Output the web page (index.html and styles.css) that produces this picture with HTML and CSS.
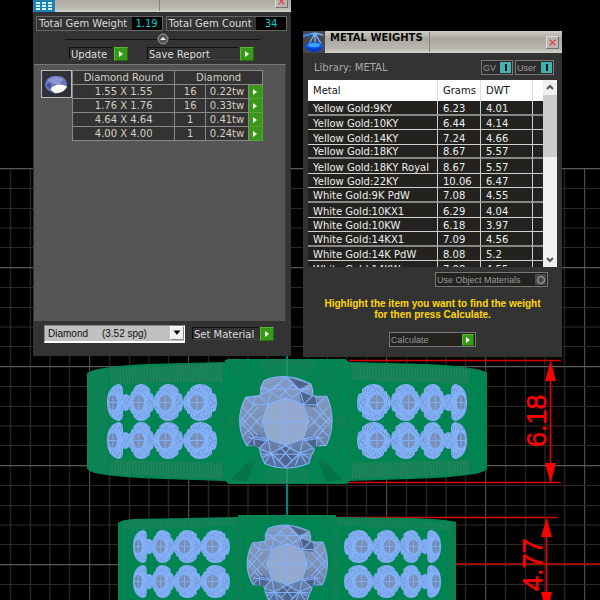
FILE: index.html
```html
<!DOCTYPE html>
<html lang="en">
<head>
<meta charset="utf-8">
<title>Metal Weights</title>
<link rel="stylesheet" href="styles.css">
</head>
<body>
<main class="desktop">
<svg class="viewport" viewBox="0 0 600 600" preserveAspectRatio="xMidYMid slice" role="img" aria-label="Ring model">
  <defs>
    <pattern id="cols" x="-10" y="0" width="99" height="99" patternUnits="userSpaceOnUse">
      <path d="M20.5 0V99M40.5 0V99M60 0V99M79.5 0V99" stroke="#242424" stroke-width="1.4"/>
      <path d="M.5 0V99" stroke="#4a4a4a" stroke-width="1.4"/>
    </pattern>
    <pattern id="rows" x="0" y="168" width="99" height="99" patternUnits="userSpaceOnUse">
      <path d="M0 20.5H99M0 40.5H99M0 60H99M0 79.5H99" stroke="#2b2b2b" stroke-width="1.2"/>
      <path d="M0 .7H99" stroke="#5a5a5a" stroke-width="1.3"/>
    </pattern>
    <pattern id="hatch" width="3" height="20" patternUnits="userSpaceOnUse" patternTransform="rotate(-4)">
      <path d="M1 0V20" stroke="#60786b" stroke-width="1.3" opacity=".6"/>
    </pattern>
    <pattern id="speck" width="11" height="9" patternUnits="userSpaceOnUse">
      <path d="M1 1h1M4 2h1M8 0h1M6 4h1M2 5h1M9 6h1M4 8h1M0 7h1M7 7h1" stroke="#4c6898" stroke-width=".8"/>
      <path d="M0 3l4-2M5 7l5-3" stroke="#7191c4" stroke-width=".5"/>
    </pattern>
    <symbol id="stone" viewBox="0 0 34 38" preserveAspectRatio="none">
      <path d="M5 9V6Q5 4 8 3Q11 0 17 0Q23 0 27 5L27 7L30 8V10Q34 13 34 19Q34 25 30 28V30L27 31V33Q23 38 17 38Q11 38 8 35Q5 34 5 32V29L2 28Q0 25 0 19Q0 13 2 10Z" fill="#83b1f8"/>
      <path d="M5 9V6Q5 4 8 3Q11 0 17 0Q23 0 27 5L27 7L30 8V10Q34 13 34 19Q34 25 30 28V30L27 31V33Q23 38 17 38Q11 38 8 35Q5 34 5 32V29L2 28Q0 25 0 19Q0 13 2 10Z" fill="url(#speck)"/>
      <path d="M14 10L8 15V23L14 28L24 29L30 22V15L24 10Z" fill="#83b1f8"/>
      <ellipse cx="20" cy="19" rx="7" ry="8" fill="#7891b8"/>
      <path d="M20 11V27M13 19H27" stroke="#83b1f8"/>
      <path d="M3 19l3-3 3 3-3 3Z" fill="none" stroke="#6d8ec4" stroke-width=".7"/>
    </symbol>
    <symbol id="side" viewBox="0 0 22 38" preserveAspectRatio="none">
      <path d="M0 12Q3 9 6 11V5Q7 0 11 0Q22 3 22 19Q22 35 11 38Q7 38 6 33V27Q3 29 0 26Z" fill="#83b1f8"/>
      <path d="M0 12Q3 9 6 11V5Q7 0 11 0Q22 3 22 19Q22 35 11 38Q7 38 6 33V27Q3 29 0 26Z" fill="url(#speck)"/>
      <path d="M12 9L7 15V23L12 29L20 28V10Z" fill="#83b1f8"/>
      <ellipse cx="16" cy="19" rx="4" ry="8" fill="#6d87b0"/>
      <path d="M16 11V27M12 19H20" stroke="#83b1f8"/>
    </symbol>
    <linearGradient id="facet" x1="0" y1="0" x2="0" y2="1">
      <stop offset="0" stop-color="#829bc6"/><stop offset=".5" stop-color="#7f91b2"/><stop offset="1" stop-color="#516d9b"/>
    </linearGradient>
    <g id="center-stone" stroke="#83b1f8" stroke-width="3.6" fill="none">
      <path fill="url(#facet)" d="M-75-103L-65-123Q0-152 77-113L82-96V-78L92-77L125-76Q157 0 123 72L88 74L85 90L78 102L70 127Q0 154-63 127L-75 99L-78 82L-87 73L-118 72Q-158 0-120-73L-80-78L-75-82Z"/>
      <path fill="#50658e" stroke="none" d="M10-134L70-113 42-98ZM42-93L80-80 100-65 88-42 48-50ZM-104 43L-82 37-61 60-80 78-117 70ZM60 59L84 43 102 70 83 82ZM-26 91L0 75 31 103 0 132Z"/>
      <path d="M-75-82L-44-94L0-134L44-94L82-78M-44-94L-20-112 20-72 72-108M44-94L20-112-20-72-72-108M-75-98L75-98M-80-78L-54-51 0-71 54-51 82-78M-44-94L-55-51M44-94L55-51M-120-73L-96-50-136 0-96 45-118 72M120-73L96-50 137 0 96 45 120 72M-96-50L-54-51M96-50L54-51M-96-50L-92-77M96-50L92-77M-130-45L-70 18M-136-15L-83 43M-130 45L-70-18M-136 15L-83-43M130-45L70 18M136-15L83 43M130 45L70-18M136 15L83-43M-96 45L-53 53-78 82-44 96 0 138 44 96 83 80 53 53 96 45M-96 45L-94 73M96 45L94 73M-53 53L-44 96M53 53L44 96M-75 99L75 99M-44 96L-20 118 20 73M44 96L20 118-20 73M-63 127L-44 96-30 132M63 127L44 96 30 132M-72 110L0 73 72 110M-115 48L-58 58M115 48L58 58"/>
      <path fill="#94a9cf" d="M0-71L54-49L71 0L53 53L0 73L-53 53L-71 0L-54-49Z"/>
      <path d="M0-71V73M-71 0H71"/>
    </g>
    <g id="stones-upper">
      <use href="#stone" x="357" y="384" width="34" height="37"/><use href="#stone" x="391" y="384" width="30" height="37"/><use href="#stone" x="420" y="384" width="26" height="37"/><use href="#side" x="445" y="384" width="22" height="37"/>
      <use href="#stone" x="357" y="422" width="34" height="37"/><use href="#stone" x="391" y="422" width="30" height="37"/><use href="#stone" x="420" y="422" width="26" height="37"/><use href="#side" x="445" y="422" width="22" height="37"/>
    </g>
    <g id="stones-lower">
      <use href="#stone" x="344" y="530" width="30" height="33"/><use href="#stone" x="373" y="530" width="28" height="33"/><use href="#stone" x="400" y="530" width="23" height="33"/><use href="#side" x="422" y="530" width="19" height="33"/>
      <use href="#stone" x="344" y="565" width="30" height="33"/><use href="#stone" x="373" y="565" width="28" height="33"/><use href="#stone" x="400" y="565" width="23" height="33"/><use href="#side" x="422" y="565" width="19" height="33"/>
    </g>
  </defs>
  <rect width="600" height="600" fill="#000"/>
  <rect y="168" width="600" height="432" fill="url(#cols)"/>
  <rect y="168" width="600" height="432" fill="url(#rows)"/>
  <path d="M287 350V520" stroke="#00838c" stroke-width="2"/>

  <path d="M349 360.5H561M349 482.5H561M336 517.5H557" stroke="#d60000" stroke-width="1.4"/>
  <path d="M455 564H600" stroke="#9a0f00" stroke-width="2"/>

  <path fill="#008552" d="M87 373Q92 370 98 369Q120 365 147 364L225 362V360L229 359H345L349 362L427 364Q454 365 476 369Q483 370 487 373V469Q484 472 475 474Q450 478 411 479L349 481V483L345 484H229L225 481L163 479Q124 478 99 474Q90 472 87 469Z"/>
  <path fill="url(#hatch)" d="M108 369L222 363V382L112 384ZM352 363L468 369V384L352 380ZM112 460L222 463V479L108 474ZM352 463L468 460V474L352 479Z"/>
  <path fill="url(#hatch)" opacity=".5" d="M87 375L106 369V474L87 468ZM258 360H320L308 376H264ZM268 468H306L312 483H260Z"/>
  <g fill="none" stroke="#36745b" opacity=".6">
    <path d="M106 369V474M222 363V480M351 363V480M469 369V474M226 361L262 402M347 361L311 402M226 482L257 456M347 482L313 456"/>
    <path d="M230 361L258 390M236 361L260 384M241 361L262 380M343 361L316 390M337 361L314 384M332 361L312 380M262 402Q245 396 240 391Q232 400 229 421Q232 450 241 455M311 402Q328 396 333 391Q341 400 344 421Q341 450 332 455M258 383Q264 362 286 360Q310 362 315 383M258 459Q264 480 286 483Q310 480 315 459"/>
    <path d="M228 417H237M227 420H237M227 423H237M229 426H237M335 417H346M335 420H347M335 423H347M335 426H346"/>
  </g>
  <path fill="#075f40" opacity=".45" d="M230 480L252 458 240 479ZM233 480L255 459 247 482ZM343 480L321 458 333 479ZM340 480L318 459 326 482Z"/>
  <path d="M287 360V483" stroke="#70a58a" opacity=".6"/>
  <use href="#stones-upper"/>
  <use href="#stones-upper" transform="translate(574) scale(-1 1)"/>
  <use href="#center-stone" transform="translate(285.5 421.5) scale(.331)"/>

  <path fill="#008552" d="M118 523Q120 520 133 519L238 517V515H336V517L410 518Q445 519 456 522V600H118Z"/>
  <path fill="url(#hatch)" opacity=".7" d="M124 521L236 517V526L124 530ZM338 518L450 522V530L338 526Z"/>
  <path fill="none" stroke="#40745b" opacity=".7" d="M124 522V600M236 517V600M240 517V600M334 517V600M338 517V600M450 522V600M241 517L270 544M333 517L304 544"/>
  <use href="#stones-lower"/>
  <use href="#stones-lower" transform="translate(574) scale(-1 1)"/>
  <use href="#center-stone" transform="translate(287 564) scale(.288)"/>

  <path d="M550.5 362V482M546.5 519V600" stroke="#e60000" stroke-width="1.6"/>
  <path fill="#f00" d="M550.5 361L556 381H545ZM550.5 483L545 463H556ZM546.5 518L552 537H541ZM541 592H552L550 600H543Z"/>
  <text class="dimension" transform="translate(546 447) rotate(-90)">6.18</text>
  <text class="dimension" transform="translate(542 591) rotate(-90)">4.77</text>
</svg>

<section class="window gem-window" aria-label="Gem report">
  <header class="titlebar gem-title">
    <svg class="app-icon" viewBox="0 0 22 22" aria-hidden="true"><rect width="22" height="22" fill="#1b82b7"/><path d="M2 0H20V10H2Z" fill="#e5f4fa"/><path d="M3 3H9M11 3H19M3 6H9M11 6H19" stroke="#3489b0"/><path d="M3 13h4M9 13h4M15 13h4M3 16h4M9 16h4M15 16h4M3 19h4M9 19h4M15 19h4" stroke="#d9f3fa" stroke-width="2"/></svg>
    <span class="title-text"></span>
    <button class="close" aria-label="Close"><svg viewBox="0 0 12 12"><path d="M3 3L9 9M9 3L3 9"/></svg></button>
  </header>
  <div class="totals">
    <div class="total"><span>Total Gem Weight</span><output>1.19</output></div>
    <div class="total"><span>Total Gem Count</span><output>34</output></div>
  </div>
  <div class="divider"><button class="knob" aria-label="Collapse"><svg viewBox="0 0 12 12"><circle cx="6" cy="6" r="5" fill="#555" stroke="#999"/><path d="M3 7L6 4L9 7Z" fill="#eee"/></svg></button></div>
  <div class="actions">
    <button class="action update"><span>Update</span><i class="go"></i></button>
    <button class="action save"><span>Save Report</span><i class="go"></i></button>
  </div>
  <div class="gem-panel">
    <svg class="thumb" viewBox="0 0 31 28" aria-hidden="true"><rect width="31" height="28" fill="#303036"/><path d="M3 15Q4 5 15 5Q26 5 27 14Q27 20 20 23Q14 26 9 22Q4 20 3 15Z" fill="#6874bd"/><path d="M6 10Q14 3 23 9L19 14H10Z" fill="#8f95d0"/><path d="M4 15L10 12 9 20Z" fill="#4350a0"/><path d="M9 20Q13 13 23 15L27 17Q23 24 14 24Z" fill="#fff"/></svg>
    <table class="gem-table">
      <thead><tr><th class="c-size">Diamond Round</th><th colspan="3">Diamond</th></tr></thead>
      <tbody>
        <tr><td>1.55 X 1.55</td><td class="c-count">16</td><td class="c-weight">0.22tw</td><td class="c-go"><button class="go" aria-label="Select 1.55"></button></td></tr>
        <tr><td>1.76 X 1.76</td><td>16</td><td>0.33tw</td><td class="c-go"><button class="go" aria-label="Select 1.76"></button></td></tr>
        <tr><td>4.64 X 4.64</td><td>1</td><td>0.41tw</td><td class="c-go"><button class="go" aria-label="Select 4.64"></button></td></tr>
        <tr><td>4.00 X 4.00</td><td>1</td><td>0.24tw</td><td class="c-go"><button class="go" aria-label="Select 4.00"></button></td></tr>
      </tbody>
    </table>
  </div>
  <footer class="material">
    <div class="select-wrap">
      <select aria-label="Gem material"><option>Diamond&nbsp;&nbsp;&nbsp;&nbsp;&nbsp;(3.52 spg)</option></select>
      <span class="drop" aria-hidden="true"><svg viewBox="0 0 14 14"><path d="M3 4H11L7 9Z"/></svg></span>
    </div>
    <button class="action set"><span>Set Material</span><i class="go"></i></button>
  </footer>
</section>

<section class="window metal-window" aria-label="Metal weights">
  <header class="titlebar">
    <svg class="app-icon" viewBox="0 0 22 22" aria-hidden="true"><rect width="22" height="22" fill="#454850"/><path d="M0 5L12 2L20 4M12 2L6 13M12 2L18 13M12 2V12" stroke="#79b5ff" stroke-width="1.4" fill="none"/><path d="M0 5L8 3" stroke="#2b8cff" stroke-width="2"/><ellipse cx="11" cy="15" rx="9" ry="4" fill="#165be8"/><path d="M2 15Q4 21 11 21Q18 21 20 15Q11 20 2 15Z" fill="#083bc2"/><ellipse cx="11" cy="14" rx="6" ry="2" fill="#3fa6ff"/></svg>
    <h1 class="title-text">METAL WEIGHTS</h1>
    <button class="close" aria-label="Close"><svg viewBox="0 0 12 12"><path d="M3 3L9 9M9 3L3 9"/></svg></button>
  </header>
  <div class="library">
    <span>Library: METAL</span>
    <div class="toggles"><button class="toggle gv"><span>GV</span><i></i></button><button class="toggle user"><span>User</span><i></i></button></div>
  </div>
  <div class="metal-list">
    <div class="table-clip">
      <table class="metal-table">
        <thead><tr><th class="m-name">Metal</th><th class="m-grams">Grams</th><th class="m-dwt">DWT</th><th></th></tr></thead>
        <tbody>
          <tr><td>Yellow Gold:9KY</td><td>6.23</td><td>4.01</td><td></td></tr>
          <tr><td>Yellow Gold:10KY</td><td>6.44</td><td>4.14</td><td></td></tr>
          <tr><td>Yellow Gold:14KY</td><td>7.24</td><td>4.66</td><td></td></tr>
          <tr><td>Yellow Gold:18KY</td><td>8.67</td><td>5.57</td><td></td></tr>
          <tr><td>Yellow Gold:18KY Royal</td><td>8.67</td><td>5.57</td><td></td></tr>
          <tr><td>Yellow Gold:22KY</td><td>10.06</td><td>6.47</td><td></td></tr>
          <tr><td>White Gold:9K PdW</td><td>7.08</td><td>4.55</td><td></td></tr>
          <tr><td>White Gold:10KX1</td><td>6.29</td><td>4.04</td><td></td></tr>
          <tr><td>White Gold:10KW</td><td>6.18</td><td>3.97</td><td></td></tr>
          <tr><td>White Gold:14KX1</td><td>7.09</td><td>4.56</td><td></td></tr>
          <tr><td>White Gold:14K PdW</td><td>8.08</td><td>5.2</td><td></td></tr>
          <tr><td>White Gold:14KW</td><td>7.08</td><td>4.55</td><td></td></tr>
        </tbody>
      </table>
    </div>
    <div class="scrollbar" aria-hidden="true">
      <svg viewBox="0 0 14 15"><path d="M4 9L7 6L10 9"/></svg>
      <span class="scroll-thumb"></span>
      <svg viewBox="0 0 14 15"><path d="M4 6L7 9L10 6"/></svg>
    </div>
  </div>
  <button class="boxed object-materials"><span>Use Object Materials</span><i class="radio"></i></button>
  <p class="hint">Highlight the item you want to find the weight<br>for then press Calculate.</p>
  <button class="boxed calculate"><span>Calculate</span><i class="go"></i></button>
</section>
</main>
</body>
</html>
```
FILE: styles.css
```css
* { box-sizing: border-box; }
body { margin: 0; background: #000; color: #ddd; font: 10px/12px "DejaVu Sans", Verdana, sans-serif; }
button { font: inherit; color: inherit; padding: 0; border: 0; background: none; }
svg { display: block; }
.desktop { position: relative; min-height: 100vh; overflow: hidden; }
.viewport { position: absolute; inset: 0; width: 100%; height: 100%; }
.dimension { font: 27px "Liberation Sans", sans-serif; fill: #f00; stroke: #f00; stroke-width: 0.5; }

/* windows on the desktop */
.window { position: absolute; display: flex; flex-direction: column; background: #333; }
.gem-window { left: 33px; top: -10px; width: 258px; }
.metal-window { left: 303px; top: 31px; width: 259px; padding-bottom: 10px; }
.titlebar { display: flex; align-items: center; height: 22px; padding-right: 3px; background: linear-gradient(#d0cec7, #a9a79f 35%, #b9b7b1 80%, #d5d3cc); }
.gem-title { margin-bottom: 4px; }
.app-icon { width: 22px; height: 22px; }
.title-text { width: 105px; height: 20px; margin: 0; padding-left: 5px; border-right: 1px solid #85837d; color: #080808; font-size: 10px; line-height: 12px; font-weight: bold; white-space: nowrap; }
.close { width: 13px; height: 13px; margin-left: auto; border: 1px solid #77746f; border-top-color: #ddd; border-left-color: #ddd; background: #b9b6b0; }
.close path { stroke: #dc4248; stroke-width: 1.3; }

.totals { display: flex; gap: 3px; padding: 0 4px 0 3px; }
.total { display: flex; flex: 1 1 auto; height: 15px; border: 1px solid #666; line-height: 13px; }
.total span { flex: 1; padding-left: 2px; white-space: nowrap; }
.total output { width: 30px; background: #000; color: #00cfd2; text-align: center; }
.divider { display: flex; justify-content: center; align-items: center; height: 16px; margin: 0 31px 0 32px; background: linear-gradient(#111, #111) center / 100% 1px no-repeat; }
.knob { width: 12px; height: 12px; }
.actions { display: flex; height: 17px; padding-left: 36px; gap: 19px; }
.action { display: flex; gap: 2px; height: 14px; text-align: left; line-height: 13px; }
.action span { padding-left: 1px; height: 13px; border-left: 1px solid #0a0a0a; border-top: 1px solid #111; border-bottom: 1px solid #444; white-space: nowrap; }
.update span { width: 43px; }
.save span { width: 91px; }
.set span { width: 66px; }
.go { display: flex; flex: none; width: 14px; height: 14px; align-items: center; justify-content: center; background: #399719; border: 1px solid #59b830; border-right-color: #246f0b; border-bottom-color: #246f0b; }
.go::before { content: ""; border-left: 4px solid #f0ffe8; border-top: 3px solid transparent; border-bottom: 3px solid transparent; }

.gem-panel { display: flex; align-items: flex-start; height: 257px; margin: 0 5px 0 1px; padding: 5px 0 0 7px; background: #555; border-top: 1px solid #777; border-right: 1px solid #444; }
.thumb { width: 31px; height: 28px; border: 1px solid #bbb; }
.gem-table { border-collapse: collapse; width: 191px; text-align: center; background: #333; }
.gem-table th, .gem-table td { height: 14px; padding: 0; border: 1px solid #888; font-weight: normal; line-height: 12px; color: #d4cfc4; }
.c-size { width: 103px; }
.c-count { width: 31px; }
.c-weight { width: 43px; }
.gem-table .c-go { width: 14px; border-color: #59a030; }
.c-go .go { height: 13px; width: 13px; border: 0; }

.material { display: flex; justify-content: space-between; padding: 4px 17px 13px 11px; align-items: center; }
.select-wrap { display: flex; width: 141px; height: 18px; border: 1px solid #888; border-right-color: #fff; border-bottom: 2px solid #fff; background: #c0c0c0; }
.select-wrap select { flex: 1; min-width: 0; appearance: none; border: 0; border-radius: 0; padding: 0 0 0 3px; background: #c0c0c0; color: #111; font: 10px/15px "Liberation Sans", sans-serif; }
.drop { width: 14px; height: 14px; background: #efefef; border: 1px solid #fff; border-right-color: #888; border-bottom-color: #888; }

.library { display: flex; align-items: center; justify-content: space-between; height: 27px; padding: 2px 8px 0 11px; color: #aaa; }
.toggles { display: flex; gap: 2px; }
.toggle { display: flex; align-items: center; justify-content: space-between; height: 15px; border: 1px solid #777; background: #2c2c2c; padding: 0 1px; font: 9px/12px "Liberation Sans", sans-serif; color: #999; }
.gv { width: 32px; }
.user { width: 39px; }
.toggle i { width: 11px; height: 11px; background: linear-gradient(#041818, #041818) center / 2px 7px no-repeat #44b0b0; }

.metal-list { display: flex; height: 187px; margin: 0 5px; }
.table-clip { flex: 1; overflow: hidden; }
.metal-table { width: 100%; height: 196px; border-collapse: separate; border-spacing: 0; table-layout: fixed; text-align: left; background: #23221f; color: #eee; }
.metal-table th { height: 21px; padding: 0 0 0 5px; background: #fff; color: #111; font-weight: normal; border-right: 1px solid #ddd; }
.metal-table td { padding: 3px 0 0 5px; line-height: 10px; vertical-align: bottom; white-space: nowrap; border-right: 1px solid #ccc; border-bottom: 1px solid #d0d0d0; }
.metal-table tbody tr:nth-child(3n+1) td { border-bottom: 2px solid #888; padding-top: 2px; }
.metal-table th:last-child, .metal-table td:last-child { border-right: 0; }
.m-name { width: 130px; }
.m-grams { width: 43px; }
.m-dwt { width: 52px; }
.scrollbar { display: flex; flex-direction: column; justify-content: space-between; width: 14px; background: #f0f0f0; }
.scrollbar svg { width: 14px; height: 15px; }
.scrollbar path { fill: none; stroke: #555; stroke-width: 2; }
.scroll-thumb { height: 62px; margin-bottom: auto; background: #cdcdcd; }

.boxed { display: flex; align-items: center; justify-content: space-between; height: 15px; padding: 0 1px; border: 1px solid #777; background: #24231f; color: #999; font: 9px/12px "Liberation Sans", sans-serif; }
.object-materials { width: 113px; margin: 5px 14px 0 auto; }
.radio { display: flex; align-items: center; justify-content: center; width: 11px; height: 11px; background: #4a4a4a; }
.radio::before { content: ""; width: 6px; height: 6px; border: 1px solid #aaa; border-radius: 50%; }
.hint { margin: 11px 10px 12px 10px; text-align: center; color: #ffd800; font: bold 10px/11px "Liberation Sans", sans-serif; }
.calculate { width: 87px; margin: 0 auto; }
.calculate .go { width: 12px; height: 12px; }
```
